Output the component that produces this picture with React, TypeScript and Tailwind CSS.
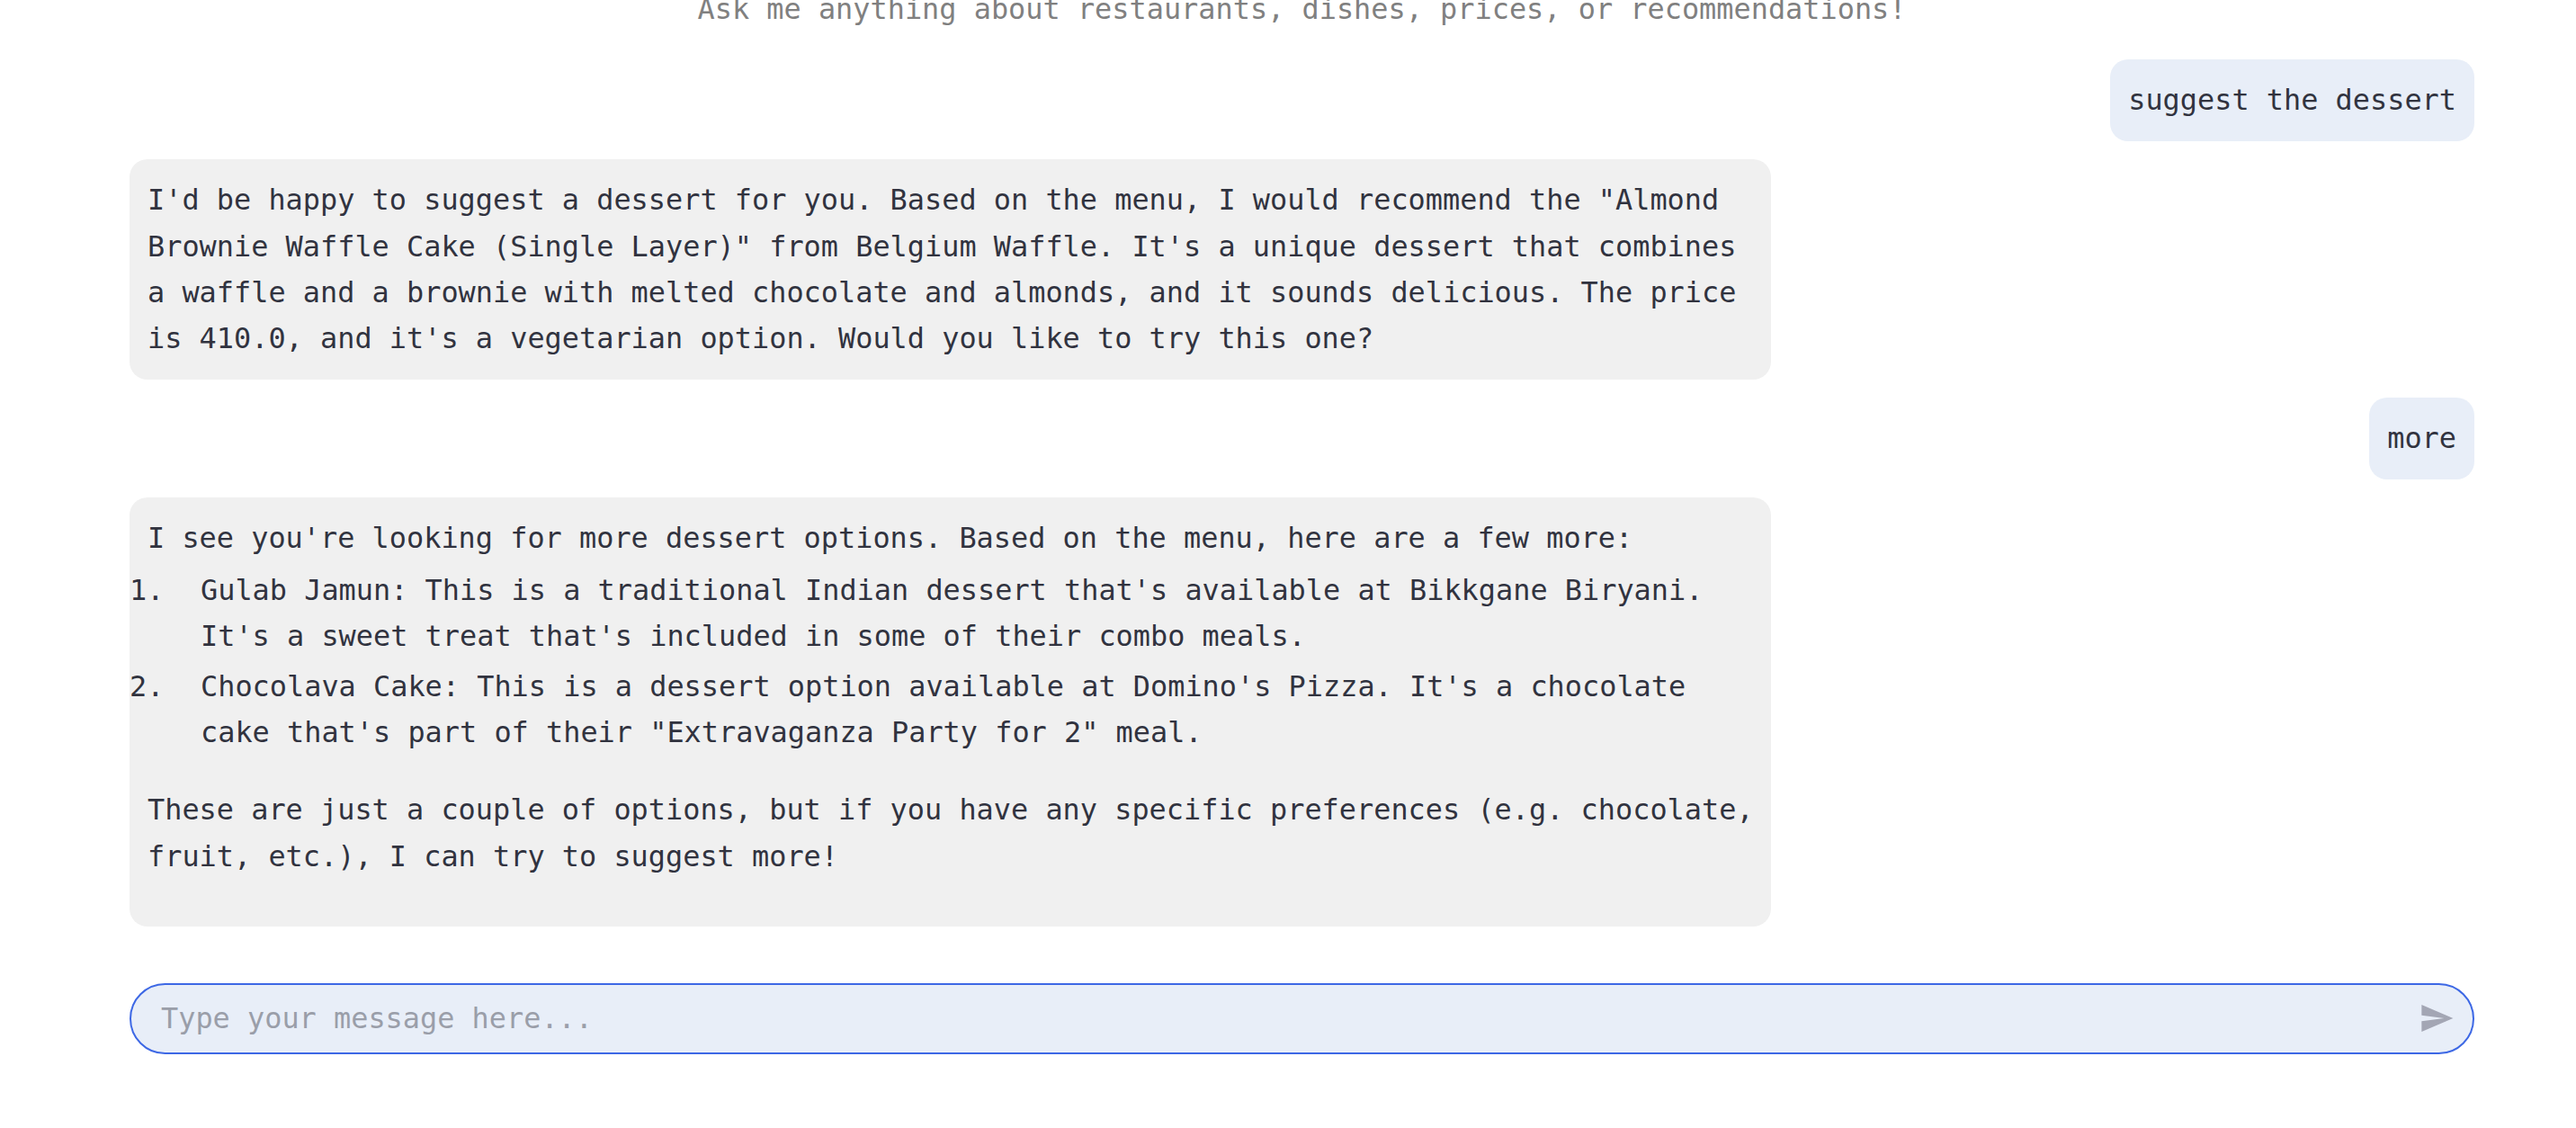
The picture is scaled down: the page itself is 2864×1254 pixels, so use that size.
import { useState } from "react";

const mono = "font-['DejaVu_Sans_Mono','Liberation_Mono',monospace]";

type Msg =
  | { role: "user"; text: string }
  | { role: "assistant"; paras: string[][]; list?: string[][]; after?: string[][] };

const messages: Msg[] = [
  { role: "user", text: "suggest the dessert" },
  {
    role: "assistant",
    paras: [
      [
        `I'd be happy to suggest a dessert for you. Based on the menu, I would recommend the "Almond`,
        `Brownie Waffle Cake (Single Layer)" from Belgium Waffle. It's a unique dessert that combines`,
        `a waffle and a brownie with melted chocolate and almonds, and it sounds delicious. The price`,
        `is 410.0, and it's a vegetarian option. Would you like to try this one?`,
      ],
    ],
  },
  { role: "user", text: "more" },
  {
    role: "assistant",
    paras: [[`I see you're looking for more dessert options. Based on the menu, here are a few more:`]],
    list: [
      [
        `Gulab Jamun: This is a traditional Indian dessert that's available at Bikkgane Biryani.`,
        `It's a sweet treat that's included in some of their combo meals.`,
      ],
      [
        `Chocolava Cake: This is a dessert option available at Domino's Pizza. It's a chocolate`,
        `cake that's part of their "Extravaganza Party for 2" meal.`,
      ],
    ],
    after: [
      [
        `These are just a couple of options, but if you have any specific preferences (e.g. chocolate,`,
        `fruit, etc.), I can try to suggest more!`,
      ],
    ],
  },
];

const Lines = ({ lines }: { lines: string[] }) => (
  <>
    {lines.map((l, i) => (
      <span key={i} className="block whitespace-pre">
        {l}
      </span>
    ))}
  </>
);

const SendIcon = () => (
  <svg viewBox="0 0 24 24" className="w-[40px] h-[40px]" fill="#a3a6b4">
    <path d="M2.01 21L23 12 2.01 3 2 10l15 2-15 2z" />
  </svg>
);

export default function App() {
  const [input, setInput] = useState("");

  return (
    <div className={`${mono} min-h-screen bg-white text-[31.9px] leading-[51.2px] text-[#31333f] overflow-hidden`}>
      <div className="pl-[144px] pr-[113px]">
        {/* Subtitle, mostly scrolled off */}
        <p className="-mt-[15px] mb-[30px] text-center text-[#808080]">
          Ask me anything about restaurants, dishes, prices, or recommendations!
        </p>

        {/* Chat history */}
        <div className="flex flex-col gap-5">
          {messages.map((m, i) =>
            m.role === "user" ? (
              <div key={i} className="flex justify-end">
                <div className="bg-[#e8eef8] rounded-[20px] px-5 py-5 whitespace-pre">{m.text}</div>
              </div>
            ) : (
              <div key={i} className="flex justify-start">
                <div className="w-[70%] bg-[#f0f0f0] rounded-[20px] p-5">
                  {m.paras.map((p, j) => (
                    <p key={j} className={m.list ? "mb-[6px]" : ""}>
                      <Lines lines={p} />
                    </p>
                  ))}
                  {m.list && (
                    <ol className="mb-[35px] flex flex-col gap-[5px]">
                      {m.list.map((item, k) => (
                        <li key={k} className="flex -ml-5">
                          <span className="w-[79px] shrink-0">{k + 1}.</span>
                          <span>
                            <Lines lines={item} />
                          </span>
                        </li>
                      ))}
                    </ol>
                  )}
                  {m.after?.map((p, j) => (
                    <p key={j} className="mb-8">
                      <Lines lines={p} />
                    </p>
                  ))}
                </div>
              </div>
            )
          )}
        </div>

        {/* Input */}
        <div className="mt-[63px] flex items-center h-[79px] rounded-full border-2 border-[#3d68e5] bg-[#e8eef8] pl-[33px] pr-[20px]">
          <input
            value={input}
            onChange={(e) => setInput(e.target.value)}
            placeholder="Type your message here..."
            className={`${mono} flex-1 bg-transparent outline-none text-[31.9px] text-[#31333f] placeholder:text-[#9a9ea9]`}
          />
          <button className="flex items-center justify-center">
            <SendIcon />
          </button>
        </div>
      </div>
    </div>
  );
}
